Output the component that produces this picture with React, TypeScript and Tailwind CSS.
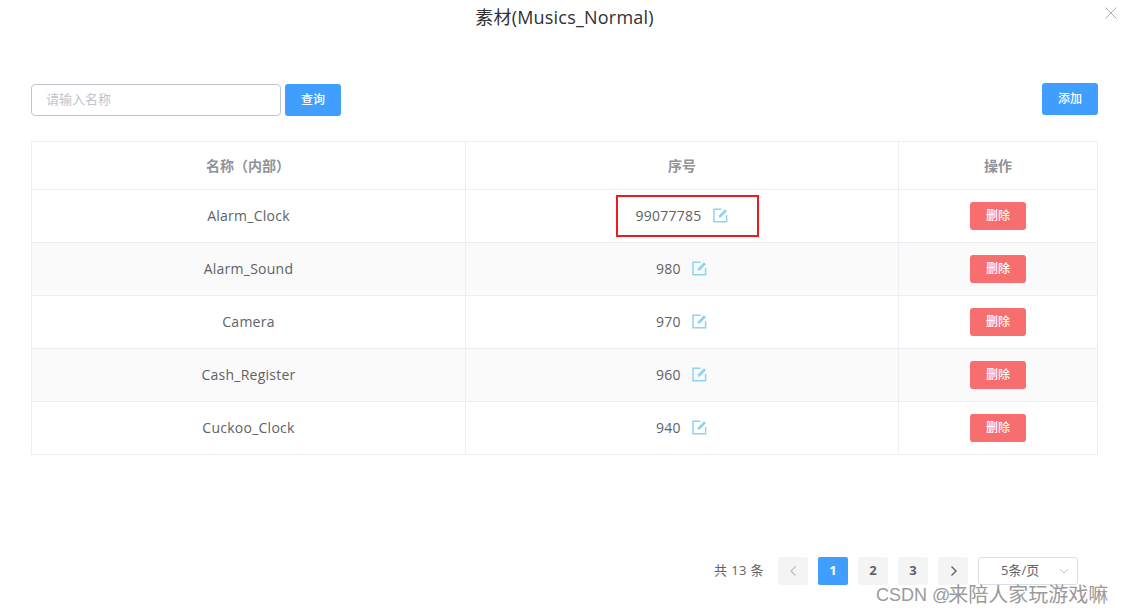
import React from "react";

const font = { fontFamily: '"Open Sans", "Noto Sans CJK SC", sans-serif' };

const rows = [
  { name: "Alarm_Clock", seq: "99077785", boxed: true },
  { name: "Alarm_Sound", seq: "980" },
  { name: "Camera", seq: "970" },
  { name: "Cash_Register", seq: "960" },
  { name: "Cuckoo_Clock", seq: "940" },
];

function EditIcon() {
  return (
    <svg width="15" height="15" viewBox="0 0 15 15" fill="none" className="shrink-0">
      <path d="M8.5 1.2H1v12.6h12.6V7" stroke="#8fd3f0" strokeWidth="1.5" />
      <path d="M5.5 9.8l.6-2.6L12 1.2l2 2-5.9 6-2.6.6z" fill="#8fd3f0" />
    </svg>
  );
}

function PageButton({ children, active }: { children: React.ReactNode; active?: boolean }) {
  return (
    <div
      className={`w-[30px] h-[28px] rounded-[2px] flex items-center justify-center text-[13px] font-bold ${
        active ? "bg-[#409eff] text-white" : "bg-[#f4f4f5] text-[#606266]"
      }`}
    >
      {children}
    </div>
  );
}

export default function App() {
  return (
    <div className="w-[1123px] h-[615px] bg-white overflow-hidden relative text-[#606266]" style={font}>
      <div className="h-[36px] flex items-center justify-center text-[18px] leading-none text-[#303133] pl-[6px] pb-[2px] tracking-[0.2px]">
        素材(Musics_Normal)
      </div>
      <svg width="12" height="12" viewBox="0 0 12 12" className="absolute left-[1105px] top-[7px]">
        <path d="M0.5 0.5L11.5 11.5M11.5 0.5L0.5 11.5" stroke="#a8abb2" strokeWidth="1" />
      </svg>

      <div className="pl-[31px] pr-[25px] pt-[47px]">
        <div className="flex justify-between items-start h-[58px]">
          <div className="flex gap-[4px] pt-px">
            <div className="w-[250px] h-[32px] border border-[#c0c4cc] rounded-[4px] pl-[14px] flex items-center text-[13px] text-[#c0c4cc]">
              请输入名称
            </div>
            <div className="w-[56px] h-[32px] bg-[#409eff] rounded-[3px] text-white text-[12px] font-medium flex items-center justify-center">
              查询
            </div>
          </div>
          <div className="w-[56px] h-[32px] bg-[#409eff] rounded-[3px] text-white text-[12px] font-medium flex items-center justify-center">
            添加
          </div>
        </div>

        <div className="w-[1067px] border-x border-t border-[#ebeef5]">
          <div className="flex h-[48px] border-b border-[#ebeef5] text-[14px] font-bold text-[#909399]">
            <div className="w-[433px] flex items-center justify-center pr-px">名称（内部）</div>
            <div className="w-[433px] border-l border-[#ebeef5] flex items-center justify-center">序号</div>
            <div className="flex-1 border-l border-[#ebeef5] flex items-center justify-center">操作</div>
          </div>
          {rows.map((r, i) => (
            <div
              key={r.name}
              className={`flex h-[53px] text-[14px] border-b border-[#ebeef5] ${
                i % 2 === 1 ? "bg-[#fafafa]" : "bg-white"
              }`}
            >
              <div className="w-[433px] flex items-center justify-center pb-[2px] tracking-[0.25px]">{r.name}</div>
              <div className="w-[433px] border-l border-[#ebeef5] flex items-center justify-center gap-[11px] relative pb-[2px] pr-px">
                <span className="tracking-[0.25px]">{r.seq}</span>
                <EditIcon />
                {r.boxed && (
                  <div className="absolute left-[150px] top-[5px] w-[143px] h-[42px] border-2 border-[#ed1c24]" />
                )}
              </div>
              <div className="flex-1 border-l border-[#ebeef5] flex items-center justify-center">
                <div className="w-[56px] h-[28px] bg-[#f76e6e] rounded-[3px] text-white text-[12px] font-medium flex items-center justify-center">
                  删除
                </div>
              </div>
            </div>
          ))}
        </div>

        <div className="mt-[102px] flex items-center justify-end pr-[20px] text-[13px]">
          <span className="mr-[14px] tracking-[0.4px]">共 13 条</span>
          <div className="flex gap-[10px]">
            <PageButton>
              <svg width="8" height="12" viewBox="0 0 8 12" fill="none">
                <path d="M6.5 1.5L2 6l4.5 4.5" stroke="#c0c4cc" strokeWidth="1.4" />
              </svg>
            </PageButton>
            <PageButton active>1</PageButton>
            <PageButton>2</PageButton>
            <PageButton>3</PageButton>
            <PageButton>
              <svg width="8" height="12" viewBox="0 0 8 12" fill="none" className="ml-[2px]">
                <path d="M1.5 1.5L6 6l-4.5 4.5" stroke="#606266" strokeWidth="1.4" />
              </svg>
            </PageButton>
          </div>
          <div className="ml-[10px] w-[100px] h-[28px] border border-[#dcdfe6] rounded-[3px] flex items-center justify-between pl-[22px] pr-[7px]">
            <span>5条/页</span>
            <svg width="12" height="8" viewBox="0 0 12 8" fill="none">
              <path d="M2 2l4 4 4-4" stroke="#c0c4cc" strokeWidth="1" />
            </svg>
          </div>
        </div>
      </div>

      <div className="absolute left-[876px] top-[582px] flex items-center h-[26px] text-[20px] text-[#9a9a9a] whitespace-nowrap">
        <span className="text-[18px] mr-[-2px]" style={{ fontFamily: '"Liberation Sans", sans-serif' }}>
          CSDN @
        </span>
        <span>来陪人家玩游戏嘛</span>
      </div>
    </div>
  );
}
